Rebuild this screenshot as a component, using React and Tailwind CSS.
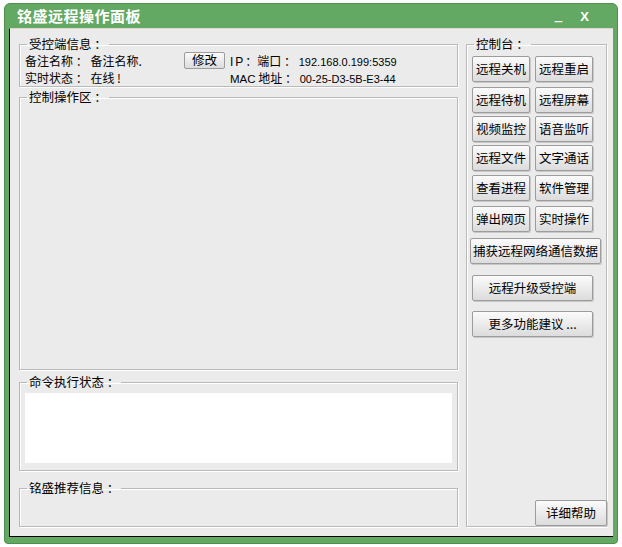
import React from "react";

const font = { fontFamily: '"Noto Sans CJK SC", "Liberation Sans", sans-serif' };
const latin = { fontFamily: '"Liberation Sans", sans-serif' };

// etched group box with title on the top line
const Group = ({ title, className, children }) => (
    <fieldset className={`border border-[#b9b9b9] shadow-[inset_1px_1px_0_#fff,1px_1px_0_#fff] px-[5px] ${className}`}>
        <legend className="ml-[2px] px-[2px] text-[12.5px] leading-[14px] text-black">{title}</legend>
        {children}
    </fieldset>
);

const Btn = ({ children, className = "" }) => (
    <button className={`h-[26px] whitespace-nowrap border border-[#9c9c9c] rounded-[2px] bg-gradient-to-b from-[#fbfbfb] to-[#dcdcdc] text-[12.5px] text-black leading-none shadow-[1px_1px_0_#c8c8c8] ${className}`}>
        {children}
    </button>
);

export default function App() {
    return (
        <div className="w-[622px] h-[547px] bg-white pt-[3px] pl-[4px]" style={font}>
            <div className="w-[614px] h-[541px] bg-[#63a963] rounded-t-[6px] rounded-b-[4px] border border-[#4e8f4e] flex flex-col">
                {/* title bar */}
                <div className="h-[24px] flex items-center justify-between px-[12px]">
                    <span className="text-white font-bold text-[15px] tracking-[0.5px]">铭盛远程操作面板</span>
                    <div className="flex items-center gap-[18px] text-white font-bold pr-[16px]">
                        <span className="text-[14px] leading-none -mt-[4px]">_</span>
                        <span className="text-[13px] leading-none" style={latin}>X</span>
                    </div>
                </div>
                {/* client area */}
                <div className="mx-[4px] h-[509px] bg-[#ebebeb] border-l border-b border-black border-t border-t-[#e3d4d4] flex gap-[8px] pl-[9px] pr-[6px] pt-[8px] pb-[9px]">
                    {/* left */}
                    <div className="w-[440px] flex flex-col">
                        <Group title="受控端信息 ：" className="h-[50px]">
                            <div className="flex text-[12px] leading-[17px] mt-[1px]">
                                <div className="w-[159px] flex flex-col">
                                    <span className="block h-[17px]">备注名称 ： 备注名称.</span>
                                    <span className="block h-[17px]">实时状态 ： 在线 !</span>
                                </div>
                                <button className="h-[17px] px-[7px] border border-[#9c9c9c] rounded-[2px] bg-gradient-to-b from-[#fbfbfb] to-[#dcdcdc] text-[12.5px] leading-none">修改</button>
                                <div className="ml-[5px] flex flex-col">
                                    <span className="block h-[17px]"><span className="tracking-[2px]" style={latin}>IP</span>：端口 ： <span className="text-[11px]" style={latin}>192.168.0.199:5359</span></span>
                                    <span className="block h-[17px]"><span className="text-[11.5px]" style={latin}>MAC</span> 地址 ： <span className="text-[11px]" style={latin}>00-25-D3-5B-E3-44</span></span>
                                </div>
                            </div>
                        </Group>
                        <Group title="控制操作区 ：" className="mt-[3px] h-[280px]" />
                        <Group title="命令执行状态 ：" className="mt-[5px] h-[96px] pb-[6px]">
                            <div className="bg-white h-[70px] mt-[4px]" />
                        </Group>
                        <Group title="铭盛推荐信息 ：" className="mt-[10px] flex-1" />
                    </div>
                    {/* right: console */}
                    <Group title="控制台 ：" className="w-[140px] flex-1 px-[5px] pb-[0px]">
                        <div className="flex flex-col h-full pt-[5px]">
                            <div className="grid grid-cols-2 gap-x-[5px] w-[121px]">
                                <Btn className="w-[58px]">远程关机</Btn>
                                <Btn className="w-[58px]">远程重启</Btn>
                                <Btn className="w-[58px] mt-[5px]">远程待机</Btn>
                                <Btn className="w-[58px] mt-[5px]">远程屏幕</Btn>
                                <Btn className="w-[58px] mt-[3px]">视频监控</Btn>
                                <Btn className="w-[58px] mt-[3px]">语音监听</Btn>
                                <Btn className="w-[58px] mt-[3px]">远程文件</Btn>
                                <Btn className="w-[58px] mt-[3px]">文字通话</Btn>
                                <Btn className="w-[58px] mt-[4px]">查看进程</Btn>
                                <Btn className="w-[58px] mt-[4px]">软件管理</Btn>
                                <Btn className="w-[58px] mt-[5px]">弹出网页</Btn>
                                <Btn className="w-[58px] mt-[5px]">实时操作</Btn>
                            </div>
                            <Btn className="w-[131px] -ml-[2px] mt-[6px]">捕获远程网络通信数据</Btn>
                            <Btn className="w-[121px] h-[22px] mt-[11px]">远程升级受控端</Btn>
                            <Btn className="w-[121px] h-[22px] mt-[10px]">更多功能建议 ...</Btn>
                            <div className="flex-1" />
                            <div className="flex justify-end -mr-[6px]">
                                <Btn className="w-[72px] h-[21px]">详细帮助</Btn>
                            </div>
                        </div>
                    </Group>
                </div>
            </div>
        </div>
    );
}
